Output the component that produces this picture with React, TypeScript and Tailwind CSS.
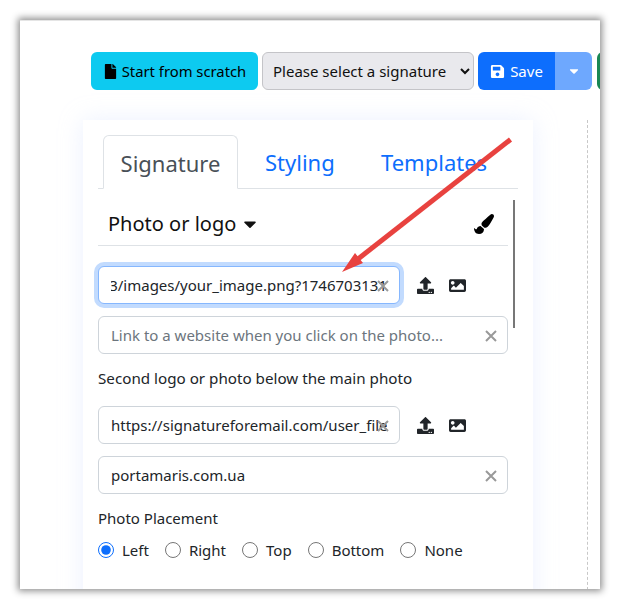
import { FaCaretDown, FaFile, FaImage, FaPaintBrush, FaSave, FaUpload } from 'react-icons/fa'

const font = "font-['Noto_Sans',sans-serif]"

function ClearMark({ className }: { className: string }) {
  return (
    <svg viewBox="0 0 12 12" className={`absolute w-3 h-3 ${className}`} fill="none" stroke="#999" strokeWidth="2">
      <path d="M1 1l10 10M11 1L1 11" />
    </svg>
  )
}

function UrlField({ value, focused, alignEnd, placeholder }: { value: string; focused?: boolean; alignEnd?: boolean; placeholder?: boolean }) {
  return (
    <div
      className={`relative h-[38px] w-full rounded-md border bg-white ${
        focused ? 'border-[#86b7fe] shadow-[0_0_0_4px_#c2dbfe]' : 'border-[#ced4da]'
      }`}
    >
      <div className={`mx-3 flex h-full items-center overflow-hidden whitespace-nowrap text-[15px] ${alignEnd ? 'justify-end' : ''} ${placeholder ? 'text-[#6c757d]' : 'text-[#212529]'}`}>
        <span className="shrink-0">{value}</span>
      </div>
      <ClearMark className="right-[10px] top-[13px]" />
    </div>
  )
}

function UploadIcons() {
  return (
    <div className="flex w-[108px] shrink-0 items-center gap-[15px] pl-[17px] text-[#212529]">
      <FaUpload className="text-[17px]" />
      <FaImage className="text-[17px]" />
    </div>
  )
}

export default function App() {
  const placements = [
    { label: 'Left', checked: true },
    { label: 'Right' },
    { label: 'Top' },
    { label: 'Bottom' },
    { label: 'None' },
  ]

  return (
    <div className={`h-[609px] w-[619px] overflow-hidden bg-white pl-5 pt-5 ${font}`}>
      <div className="relative h-[569px] w-[580px] overflow-hidden bg-white shadow-[0_0_7px_2px_rgba(0,0,0,0.45)]">
        <div className="border-t border-[#e5e5e5] pl-[71px] pt-[31px]">
          {/* Toolbar */}
          <div className="flex h-[38px] w-[560px] items-stretch text-[15px]">
            <button className="flex w-[167px] shrink-0 items-center justify-center gap-1 rounded-md bg-[#0dcaf0] text-[14.8px] text-black">
              <FaFile className="text-[15px]" />
              Start from scratch
            </button>
            <select className="ml-1 w-[212px] shrink-0 rounded-md border border-[#c4c4c8] bg-[#e9e9ed] pl-[6px] text-[#111]">
              <option>Please select a signature</option>
            </select>
            <button className="ml-1 flex w-[77px] shrink-0 items-center justify-center gap-[5px] rounded-l-md bg-[#0d6efd] text-white">
              <FaSave className="text-[15px]" />
              Save
            </button>
            <button className="flex w-[37px] shrink-0 items-center justify-center rounded-r-md bg-[#6ea8fe] text-white">
              <FaCaretDown className="text-[14px]" />
            </button>
            <div className="ml-[5px] w-3 shrink-0 rounded-l-md bg-[#198754]" />
          </div>

          {/* Editor card */}
          <div className="mt-[30px] flex items-start">
            <div className="-ml-2 h-[500px] w-[450px] shrink-0 bg-white px-[15px] pt-4 shadow-[0_0_22px_rgba(200,215,255,0.35)]">
              <div className="flex h-[53px] w-[420px] items-end border-b border-[#dee2e6] pl-[5px] text-[22px]">
                <div className="-mb-px flex h-[54px] w-[135px] items-center justify-center rounded-t-md border border-b-white border-[#dee2e6] bg-white pt-[2px] text-[#495057]">
                  Signature
                </div>
                <div className="flex h-[53px] w-[143px] items-center pl-[27px] pt-[2px] text-[#0d6efd]">Styling</div>
                <div className="flex h-[53px] items-center pt-[2px] text-[#0d6efd]">Templates</div>
              </div>

              <div className="relative w-[410px]">
                <div className="flex h-[57px] items-center justify-between border-b border-[#dee2e6] pl-[10px] pr-[14px] pt-[13px] text-[20px] text-[#111]">
                  <div className="flex items-center gap-1">
                    Photo or logo
                    <FaCaretDown className="text-[20px]" />
                  </div>
                  <FaPaintBrush className="text-[20px] text-black" />
                </div>
                {/* Scrollbar */}
                <div className="absolute left-[415px] top-[11px] h-[128px] w-[2px] bg-[#777]" />

                <div className="mt-[20px] flex">
                  <div className="min-w-0 flex-1">
                    <UrlField value="/user_files/3/images/your_image.png?1746703131" focused alignEnd />
                  </div>
                  <UploadIcons />
                </div>
                <div className="mt-3">
                  <UrlField value="Link to a website when you click on the photo..." placeholder />
                </div>
                <div className="mt-[13px] text-[15.2px] leading-[22px] text-[#212529]">Second logo or photo below the main photo</div>
                <div className="mt-[17px] flex">
                  <div className="min-w-0 flex-1">
                    <UrlField value="https://signatureforemail.com/user_files/3/images" />
                  </div>
                  <UploadIcons />
                </div>
                <div className="mt-3">
                  <UrlField value="portamaris.com.ua" />
                </div>
                <div className="mt-[13px] text-[15px] leading-[22px] text-[#212529]">Photo Placement</div>
                <div className="mt-[10px] flex items-center gap-[16px] text-[15px] text-[#212529]">
                  {placements.map((p) => (
                    <label key={p.label} className="flex items-center gap-2">
                      <input type="radio" name="placement" defaultChecked={p.checked} className="h-4 w-4 accent-[#0d6efd]" />
                      {p.label}
                    </label>
                  ))}
                </div>
              </div>
            </div>
            <div className="ml-[54px] h-[480px] w-0 border-l border-dashed border-[#c8c8c8]" />
          </div>
        </div>

        {/* Annotation arrow */}
        <svg className="absolute left-0 top-0" width="580" height="569" fill="none">
          <path d="M490.5 119.5L338 239" stroke="#e8423f" strokeWidth="5" />
          <path d="M322 252l13-19 8 10z" fill="#e8423f" />
        </svg>
      </div>
    </div>
  )
}
